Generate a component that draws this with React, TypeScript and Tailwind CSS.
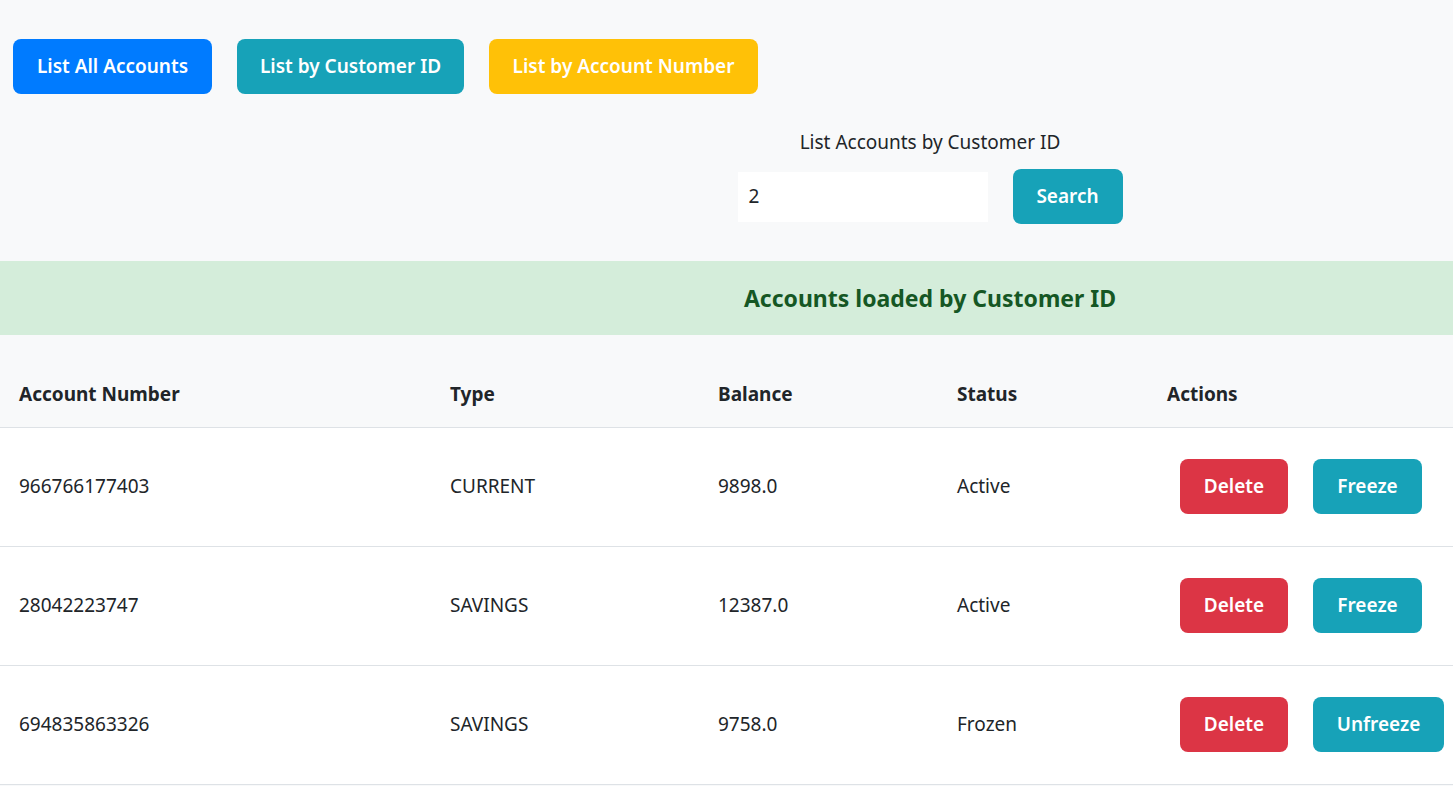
import React from "react";

const rows = [
  { num: "966766177403", type: "CURRENT", bal: "9898.0", status: "Active", action: "Freeze" },
  { num: "28042223747", type: "SAVINGS", bal: "12387.0", status: "Active", action: "Freeze" },
  { num: "694835863326", type: "SAVINGS", bal: "9758.0", status: "Frozen", action: "Unfreeze" },
];

export default function App() {
  return (
    <div
      className="min-h-[786px] w-full bg-[#f8f9fa] text-[#212529] overflow-hidden"
      style={{ fontFamily: '"Noto Sans", "Open Sans", sans-serif' }}
    >
      <div className="flex gap-[25px] pl-[13px] pt-[39px]">
        <button className="h-[55px] w-[199px] rounded-[8px] bg-[#007bff] text-[19px] font-semibold text-white">
          List All Accounts
        </button>
        <button className="h-[55px] w-[227px] rounded-[8px] bg-[#17a2b8] text-[19px] font-semibold text-white">
          List by Customer ID
        </button>
        <button className="h-[55px] w-[269px] rounded-[8px] bg-[#ffc107] text-[19px] font-semibold text-white">
          List by Account Number
        </button>
      </div>

      <div className="pl-[407px] pt-[34px] flex flex-col items-center">
        <div className="text-[19px] leading-[28px]">List Accounts by Customer ID</div>
        <div className="mt-[13px] flex items-center gap-[25px]">
          <div className="h-[50px] w-[250px] bg-white flex items-center pl-[11px] text-[19px]">2</div>
          <button className="h-[55px] w-[110px] rounded-[8px] bg-[#17a2b8] text-[19px] font-semibold text-white">
            Search
          </button>
        </div>
      </div>

      <div className="mt-[37px] h-[74px] bg-[#d4edda] pl-[407px] flex items-center justify-center text-[23px] font-bold text-[#155724]">
        Accounts loaded by Customer ID
      </div>

      <table className="mt-[26px] w-full table-fixed border-collapse text-[19px]">
        <colgroup>
          <col className="w-[431px]" />
          <col className="w-[268px]" />
          <col className="w-[239px]" />
          <col className="w-[210px]" />
          <col />
        </colgroup>
        <thead>
          <tr className="h-[66px] border-b border-[#dee2e6]">
            <th className="pl-[19px] text-left font-bold">Account Number</th>
            <th className="pl-[19px] text-left font-bold">Type</th>
            <th className="pl-[19px] text-left font-bold">Balance</th>
            <th className="pl-[19px] text-left font-bold">Status</th>
            <th className="pl-[19px] text-left font-bold">Actions</th>
          </tr>
        </thead>
        <tbody className="bg-white">
          {rows.map((r) => (
            <tr key={r.num} className="h-[119px] border-b border-[#dee2e6]">
              <td className="pl-[19px]">{r.num}</td>
              <td className="pl-[19px]">{r.type}</td>
              <td className="pl-[19px]">{r.bal}</td>
              <td className="pl-[19px]">{r.status}</td>
              <td className="pl-[32px]">
                <div className="flex gap-[25px]">
                  <button className="h-[55px] w-[108px] rounded-[8px] bg-[#dc3545] text-[19px] font-semibold text-white">
                    Delete
                  </button>
                  <button
                    className={
                      (r.action === "Unfreeze" ? "w-[131px]" : "w-[109px]") +
                      " h-[55px] rounded-[8px] bg-[#17a2b8] text-[19px] font-semibold text-white"
                    }
                  >
                    {r.action}
                  </button>
                </div>
              </td>
            </tr>
          ))}
        </tbody>
      </table>
    </div>
  );
}
